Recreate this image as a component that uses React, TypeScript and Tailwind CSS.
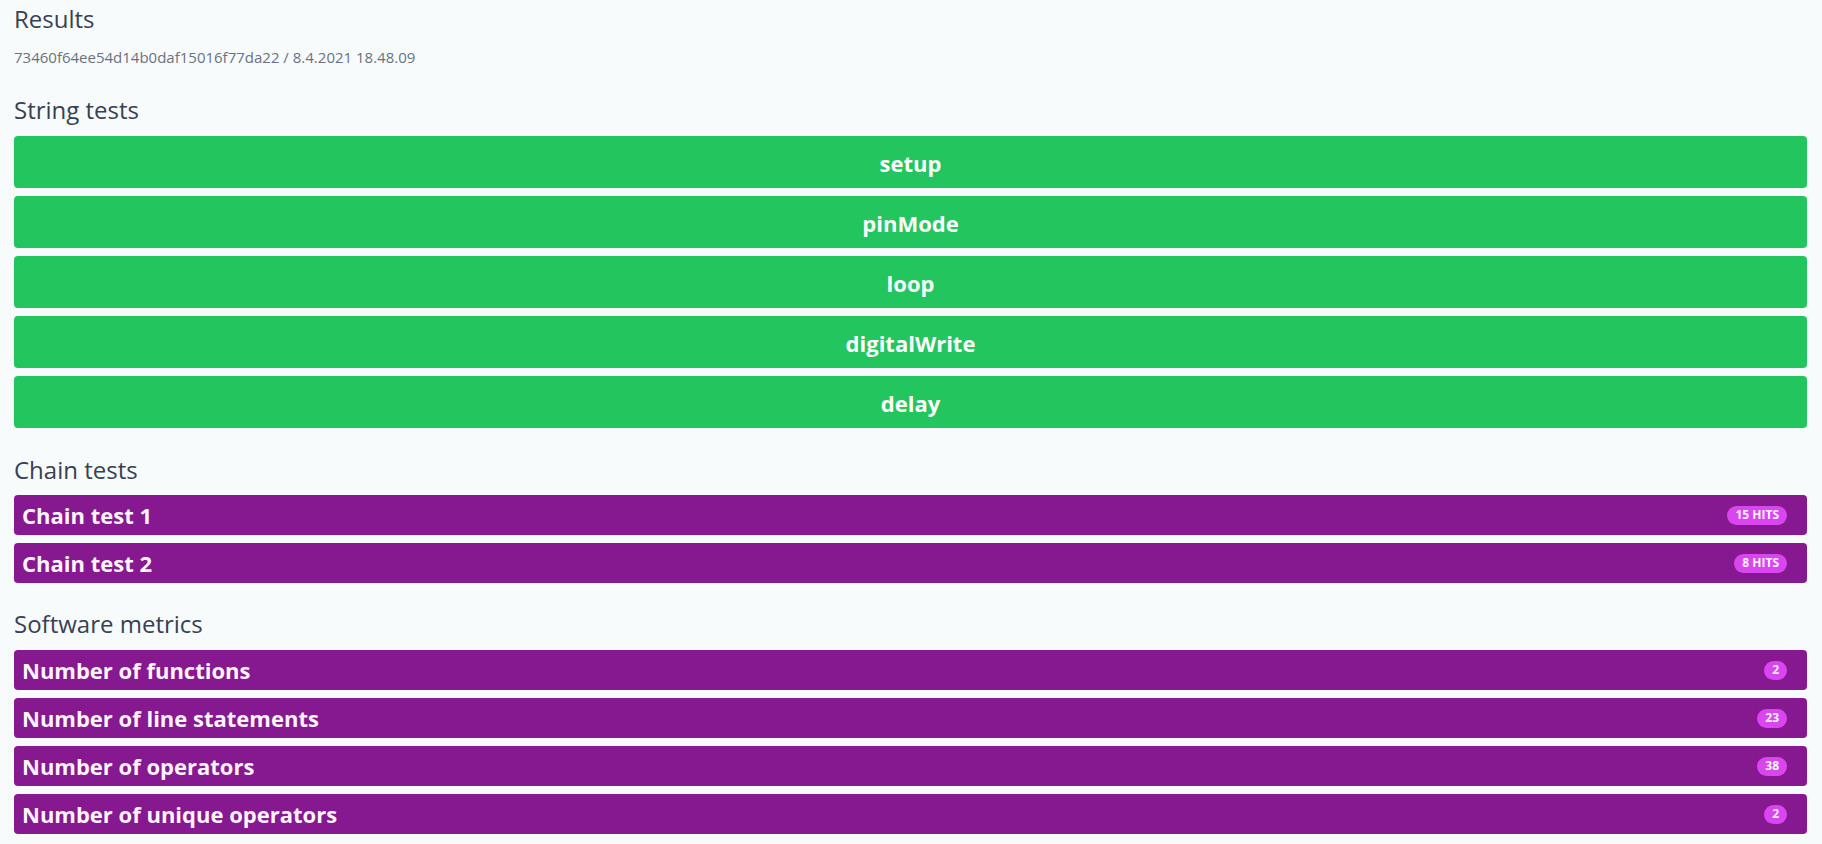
const stringTests = ['setup', 'pinMode', 'loop', 'digitalWrite', 'delay'];

const chainTests = [
  { name: 'Chain test 1', badge: '15 hits' },
  { name: 'Chain test 2', badge: '8 hits' },
];

const metrics = [
  { name: 'Number of functions', value: '2' },
  { name: 'Number of line statements', value: '23' },
  { name: 'Number of operators', value: '38' },
  { name: 'Number of unique operators', value: '2' },
];

function PurpleRow({ name, badge }: { name: string; badge: string }) {
  return (
    <div className="h-10 flex items-center justify-between bg-[#86198f] rounded px-2">
      <span className="text-[22px] font-bold text-[#fdf4ff]">{name}</span>
      <span className="h-[19px] flex items-center px-2 mr-3 rounded-full bg-[#d946ef] text-xs font-bold uppercase text-[#fdf4ff]">
        {badge}
      </span>
    </div>
  );
}

export default function App() {
  return (
    <div
      className="min-h-screen bg-[#f8fbfc] pl-[14px] pr-[15px] pt-[3px] pb-4"
      style={{ fontFamily: '"Open Sans", "Noto Sans", sans-serif' }}
    >
      <h1 className="text-2xl leading-8 text-gray-700">Results</h1>
      <div className="mt-3 text-[15px] leading-5 text-gray-500">
        73460f64ee54d14b0daf15016f77da22 / 8.4.2021 18.48.09
      </div>

      <h2 className="mt-[27px] mb-2.5 text-2xl leading-8 text-gray-700">String tests</h2>
      <div className="flex flex-col gap-2">
        {stringTests.map((t) => (
          <div
            key={t}
            className="h-[52px] pt-[3px] flex items-center justify-center bg-[#22c55e] rounded text-[22px] font-bold text-white"
          >
            {t}
          </div>
        ))}
      </div>

      <h2 className="mt-[26px] mb-[9px] text-2xl leading-8 text-gray-700">Chain tests</h2>
      <div className="flex flex-col gap-2">
        {chainTests.map((c) => (
          <PurpleRow key={c.name} name={c.name} badge={c.badge} />
        ))}
      </div>

      <h2 className="mt-[25px] mb-2.5 text-2xl leading-8 text-gray-700">Software metrics</h2>
      <div className="flex flex-col gap-2">
        {metrics.map((m) => (
          <PurpleRow key={m.name} name={m.name} badge={m.value} />
        ))}
      </div>
    </div>
  );
}
